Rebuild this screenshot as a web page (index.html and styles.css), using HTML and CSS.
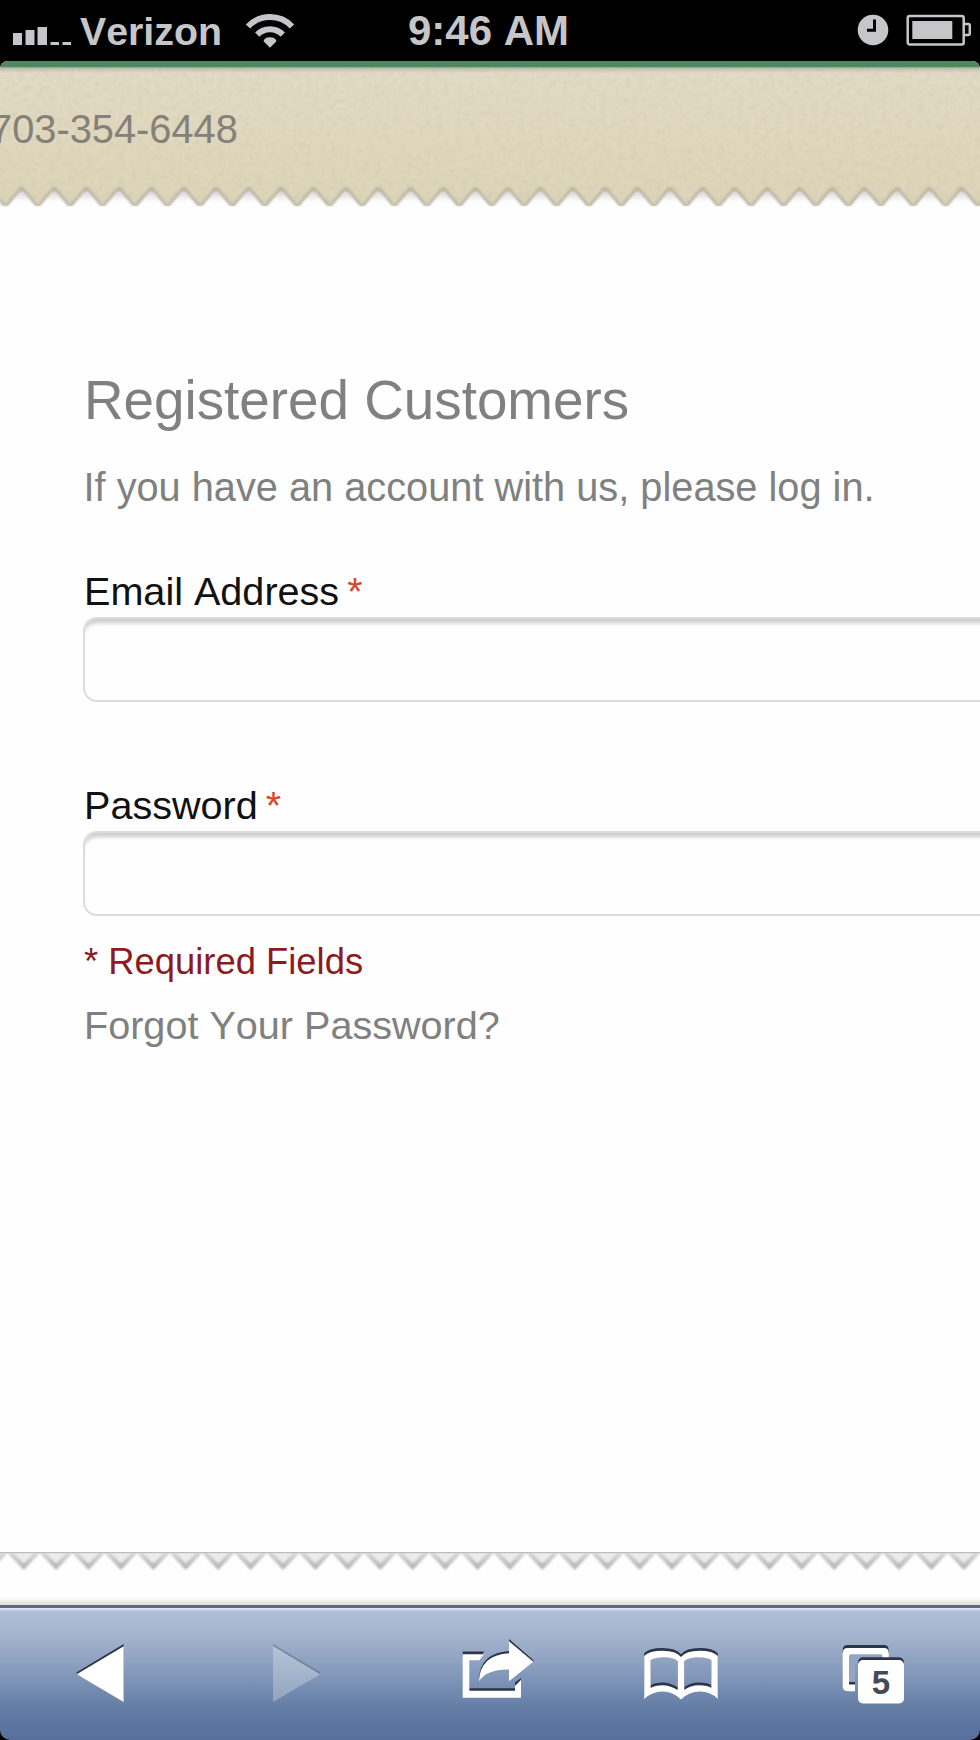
FILE: index.html
```html
<!DOCTYPE html>
<html lang="en">
<head>
  <meta charset="UTF-8">
  <meta name="viewport" content="width=device-width, initial-scale=1.0">
  <title>Customer Login</title>
  <link rel="stylesheet" href="styles.css">
</head>
<body>
  <div class="phone">
    <div class="status-bar">
      <div class="status-left">
        <svg class="signal" width="60" height="20" viewBox="0 0 60 20">
          <path d="M1 8h9v12H1zM13.5 5h9v15h-9zM25.5 2h9.5v18h-9.5zM38.5 17h8.5v3h-8.5zM50.5 17H59v3h-8.5z"/>
        </svg>
        <span class="carrier">Verizon</span>
        <svg class="wifi" width="50" height="36" viewBox="0 0 50 36">
          <path class="arc" d="M3 13.5a30.5 30.5 0 0 1 44 0"/>
          <path class="arc" d="M12.2 21.7a17.8 17.8 0 0 1 25.6 0"/>
          <path d="M18.5 28.2Q19.5 24.3 25 24.3T31.5 28.2L25 34.8z"/>
        </svg>
      </div>
      <div class="clock">9:46 AM</div>
      <div class="status-right">
        <svg width="32" height="32" viewBox="0 0 32 32">
          <circle cx="16" cy="16" r="15.3"/>
          <path class="hands" d="M17.5 5.5v10.7H10"/>
        </svg>
        <svg width="66" height="32" viewBox="0 0 66 32">
          <rect class="case" x="1.7" y="1.9" width="56" height="28.5" rx="2"/>
          <path class="case" d="M58 10h4.3q1.5 0 1.5 1.5v8q0 1.5-1.5 1.5H58"/>
          <path d="M6.3 7h40v18h-40z"/>
        </svg>
      </div>
    </div>

    <div class="page">
      <div class="top-header">
        <svg class="paper" width="980" height="142" viewBox="0 0 980 142">
          <defs>
            <linearGradient id="paperFill" x1="0" y1="0" x2="0" y2="1">
              <stop offset="0" stop-color="#8fa58c"/>
              <stop offset="0.015" stop-color="#c3c5bc"/>
              <stop offset="0.045" stop-color="#e2dbc5"/>
              <stop offset="1" stop-color="#ddd5b8"/>
            </linearGradient>
            <linearGradient id="toothShade" x1="0" y1="0" x2="0" y2="1">
              <stop offset="0" stop-color="#d9d6d2"/>
              <stop offset="0.6" stop-color="#fefefe"/>
            </linearGradient>
            <filter id="grain" x="0" y="0" width="100%" height="100%">
              <feTurbulence type="fractalNoise" baseFrequency="0.16" numOctaves="3" seed="4"/>
              <feColorMatrix values="0 0 0 0 0.55  0 0 0 0 0.5  0 0 0 0 0.36  1 0 0 0 -0.4"/>
            </filter>
            <filter id="toothShadow" x="-20%" y="-30%" width="140%" height="160%">
              <feGaussianBlur stdDeviation="1.4"/>
            </filter>
            <filter id="toothSoft" x="-20%" y="-30%" width="140%" height="160%">
              <feGaussianBlur stdDeviation="0.9"/>
            </filter>
            <pattern id="teeth" x="5.4" y="117" width="32.42" height="24" patternUnits="userSpaceOnUse">
              <path d="M-1 22.5L14 4.5Q16.2 2 18.5 4.5L33.4 22.5" fill="#a5a198" opacity="0.8" filter="url(#toothShadow)"/>
              <path d="M1.5 23L13.7 8Q16.2 5.500 18.7 8L30.9 23V25H1.5z" fill="url(#toothShade)" filter="url(#toothSoft)"/>
            </pattern>
          </defs>
          <rect width="980" height="139" fill="url(#paperFill)"/>
          <rect width="980" height="139" filter="url(#grain)" opacity="0.5"/>
          <rect y="117" width="980" height="22.5" fill="url(#teeth)"/>
        </svg>
        <div class="phone-number">703-354-6448</div>
      </div>

      <form class="login">
        <h2>Registered Customers</h2>
        <p class="intro">If you have an account with us, please log in.</p>
        <div class="field">
          <label for="email">Email Address<em>*</em></label>
          <input type="email" id="email">
        </div>
        <div class="field">
          <label for="pass">Password<em>*</em></label>
          <input type="password" id="pass">
        </div>
        <p class="required">* Required Fields</p>
        <a class="forgot">Forgot Your Password?</a>
      </form>

      <svg class="footer-teeth" width="980" height="22" viewBox="0 0 980 22">
        <defs>
          <linearGradient id="footTooth" x1="0" y1="0" x2="0" y2="1">
            <stop offset="0" stop-color="#d8d8d8"/>
            <stop offset="1" stop-color="#b0b0b0"/>
          </linearGradient>
          <filter id="soft" x="-10%" y="-10%" width="120%" height="130%">
            <feGaussianBlur stdDeviation="1"/>
          </filter>
          <pattern id="footTeeth" x="7.5" y="0" width="32.42" height="22" patternUnits="userSpaceOnUse">
            <path d="M-1 0H33.4L16.2 18z" fill="url(#footTooth)" filter="url(#soft)"/>
            <path d="M5 0H27.4L16.2 11.5z" fill="#ececec" filter="url(#soft)"/>
          </pattern>
        </defs>
        <rect width="980" height="22" fill="url(#footTeeth)"/>
        <rect width="980" height="1.2" fill="#bdbdbd"/>
      </svg>
    </div>

    <div class="toolbar">
      <svg width="80" height="80" viewBox="0 0 80 80">
        <path class="edge" d="M63.7 10L16.7 38.300V40.300L63.7 66z"/>
        <path d="M63.7 12.2L16.7 40.3L63.7 68z"/>
      </svg>
      <svg class="disabled" width="80" height="80" viewBox="0 0 80 80">
        <path class="edge" d="M16 10L63 38.3V40.3L16 12.2z"/>
        <path d="M16 12.2L63 40.3L16 68z"/>
      </svg>
      <svg width="80" height="80" viewBox="0 0 80 80">
        <g class="edge">
          <path d="M4.7 17.4H26L24 22H4.7zM11.3 54.2H57V58H11.3zM57 48.5L63 44V46L57 52z"/>
          <path d="M21 45Q22 19 51 17V5L75.3 26V28L51 20z"/>
        </g>
        <path d="M26 20.3H4.7V63.7H63V46L57 52V56.7H11.3V26.3H21.3z"/>
        <path d="M21 47.3Q22 21 51 19.3V7.3L75.3 27.7L51 47.3V35.5Q29 35 21 47.3z"/>
      </svg>
      <svg width="80" height="80" viewBox="0 0 80 80">
        <path class="edge" transform="translate(0 -2.8)" fill-rule="evenodd" d="M3.2 22Q8 16.7 21.5 16.7T40 23Q45 16.7 58.5 16.7T76.8 22V65Q70 57.5 59 57.5T40 65.5Q32 57.5 21.5 57.5T3.2 65zM9.7 26V54Q14 51.3 21.5 51.3T36.7 56V27Q32 23.3 23 23.3T9.7 26zM43.3 27V56Q49 51.3 58 51.3T70.3 54V26Q66 23.3 57 23.3T43.3 27z"/>
        <path fill-rule="evenodd" d="M3.2 22Q8 16.7 21.5 16.7T40 23Q45 16.7 58.5 16.7T76.8 22V65Q70 57.5 59 57.5T40 65.5Q32 57.5 21.5 57.5T3.2 65zM9.7 26V54Q14 51.3 21.5 51.3T36.7 56V27Q32 23.3 23 23.3T9.7 26zM43.3 27V56Q49 51.3 58 51.3T70.3 54V26Q66 23.3 57 23.3T43.3 27z"/>
      </svg>
      <svg width="80" height="80" viewBox="0 0 80 80">
        <path class="edge" d="M9.7 19V16Q9.7 11 14.7 11H51Q55.7 11 55.7 16V19zM16 48H22V52H16z"/>
        <path class="inner" d="M16 20H50V30H22V48H16z"/>
        <path fill-rule="evenodd" d="M14.7 14H51Q55.7 14 55.7 19V24H49.5V22Q49.5 20.3 47.5 20.3H18Q16 20.3 16 22.3V50.5H22V57.2H14.7Q9.7 57.2 9.7 52V19Q9.7 14 14.7 14z"/>
        <rect class="edge" x="25" y="23.2" width="46" height="40" rx="5"/>
        <rect x="25" y="26" width="46" height="43.4" rx="5"/>
        <text class="tab-count" x="48" y="60.3" text-anchor="middle">5</text>
      </svg>
    </div>
  </div>
</body>
</html>
```
FILE: styles.css
```css
* { box-sizing: border-box; }
body { margin: 0; background: #000; font-family: "Liberation Sans", Arial, sans-serif; font-kerning: none; }
h2, p { margin: 0; font-weight: normal; }
svg { display: block; flex: none; }
.phone { width: 980px; height: 1740px; display: flex; flex-direction: column; overflow: hidden; background: #000; }

/* status bar */
.status-bar { height: 61px; display: grid; grid-template-columns: 400px 1fr 400px; background: #000; color: #c6c6c8; font-weight: bold; }
.status-bar svg { fill: #c6c6c8; }
.status-left { display: flex; align-items: flex-start; padding-left: 12px; }
.signal { margin-top: 25px; }
.carrier { margin-left: 8px; width: 142px; font-size: 39.3px; line-height: 63px; }
.wifi { margin: 13px 0 0 23px; }
.wifi .arc { fill: none; stroke: #c6c6c8; stroke-width: 6; }
.clock { margin-left: -3px; text-align: center; font-size: 42px; line-height: 61px; white-space: nowrap; }
.status-right { display: flex; justify-content: flex-end; gap: 17px; padding: 13.5px 8px 0 0; }
.hands { fill: none; stroke: #000; stroke-width: 3; }
.status-bar .case { fill: none; stroke: #c6c6c8; stroke-width: 2.5; }

/* page content */
.page { position: relative; z-index: 0; height: 1544px; background: #fefefe; border-radius: 8px 8px 0 0; overflow: hidden; box-shadow: inset 0 -8px 4px -4px #dfe1da; }
.top-header { position: relative; height: 146px; border-top: 6px solid #4f875e; }
.paper { position: absolute; left: 0; top: 0; z-index: -1; }
.phone-number { margin-left: -10px; padding-top: 42px; font-size: 39.8px; line-height: 40px; color: #858178; }

.login { height: 1345px; padding: 160px 0 0 84px; font-size: 39.6px; color: #808080; }
.login h2 { font-size: 54.8px; line-height: 66px; white-space: nowrap; }
.intro { margin: 31px 0 0 -0.5px; font-size: 39.75px; line-height: 46px; white-space: nowrap; }
.field { width: 1000px; height: 214px; margin-top: 58px; }
.field + .field { margin-top: 0; height: 157px; }
.field label { display: block; height: 49px; line-height: 46px; color: #111; }
.field em { margin-left: 8px; font-style: normal; color: #d9472b; }
.field input { display: block; width: 1000px; height: 85px; margin-left: -1px; border: 2.5px solid #dcdcdc; border-radius: 14px; background: #fefefe; box-shadow: inset 0 7px 4px -3px #cbcbcb; }
.required { font-size: 36.4px; line-height: 46px; color: #8c1a1e; }
.forgot { display: block; margin-top: 17px; line-height: 46px; }

/* browser toolbar */
.toolbar { height: 135px; display: grid; grid-template-columns: 199px 196px 206px 159px 226px; justify-items: center; padding-top: 26px; border-top: 3px solid #5d6885; border-radius: 0 0 10px 10px; background: linear-gradient(#dce7f3 0, #dce7f3 1px, #b0bfd7 3px, #a9b8d1 22px, #8399bb 66px, #647da5 100px, #566f9c 132px); }
.toolbar svg { fill: #fff; }
.toolbar .edge { fill: #2c3547; }
.toolbar .inner { fill: #93a5c3; }
.toolbar .disabled { opacity: 0.27; }
.toolbar .tab-count { fill: #444b54; font-size: 33px; font-weight: bold; }
```
